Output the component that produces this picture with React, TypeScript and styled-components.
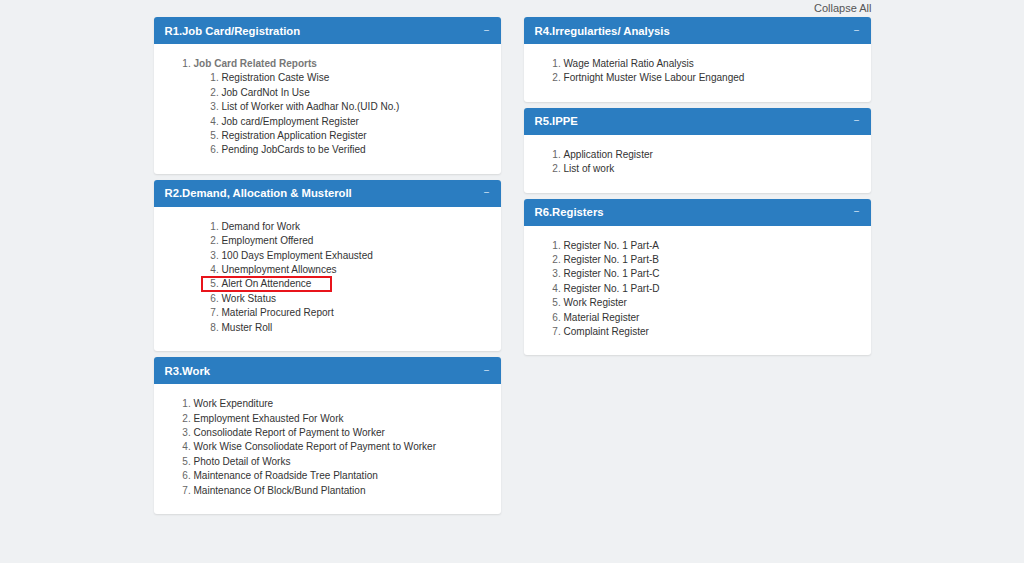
import React from 'react'
import styled, { createGlobalStyle } from 'styled-components'

type Item = { label: string; highlighted?: boolean }
type Section = { title: string; items: Item[]; group?: string; nested?: boolean }

const LEFT: Section[] = [
    {
        title: 'R1.Job Card/Registration',
        group: 'Job Card Related Reports',
        items: [
            { label: 'Registration Caste Wise' },
            { label: 'Job CardNot In Use' },
            { label: 'List of Worker with Aadhar No.(UID No.)' },
            { label: 'Job card/Employment Register' },
            { label: 'Registration Application Register' },
            { label: 'Pending JobCards to be Verified' },
        ],
    },
    {
        title: 'R2.Demand, Allocation & Musteroll',
        nested: true,
        items: [
            { label: 'Demand for Work' },
            { label: 'Employment Offered' },
            { label: '100 Days Employment Exhausted' },
            { label: 'Unemployment Allownces' },
            { label: 'Alert On Attendence', highlighted: true },
            { label: 'Work Status' },
            { label: 'Material Procured Report' },
            { label: 'Muster Roll' },
        ],
    },
    {
        title: 'R3.Work',
        items: [
            { label: 'Work Expenditure' },
            { label: 'Employment Exhausted For Work' },
            { label: 'Consoliodate Report of Payment to Worker' },
            { label: 'Work Wise Consoliodate Report of Payment to Worker' },
            { label: 'Photo Detail of Works' },
            { label: 'Maintenance of Roadside Tree Plantation' },
            { label: 'Maintenance Of Block/Bund Plantation' },
        ],
    },
]

const RIGHT: Section[] = [
    {
        title: 'R4.Irregularties/ Analysis',
        items: [{ label: 'Wage Material Ratio Analysis' }, { label: 'Fortnight Muster Wise Labour Enganged' }],
    },
    {
        title: 'R5.IPPE',
        items: [{ label: 'Application Register' }, { label: 'List of work' }],
    },
    {
        title: 'R6.Registers',
        items: [
            { label: 'Register No. 1 Part-A' },
            { label: 'Register No. 1 Part-B' },
            { label: 'Register No. 1 Part-C' },
            { label: 'Register No. 1 Part-D' },
            { label: 'Work Register' },
            { label: 'Material Register' },
            { label: 'Complaint Register' },
        ],
    },
]

function ReportList({ items, inner }: { items: Item[]; inner?: boolean }): JSX.Element {
    return (
        <List $inner={inner}>
            {items.map(item => (
                <ListItem key={item.label} $highlighted={item.highlighted}>
                    {item.label}
                </ListItem>
            ))}
        </List>
    )
}

function Panel({ section }: { section: Section }): JSX.Element {
    return (
        <StyledPanel>
            <PanelHeading>
                <span>{section.title}</span>
                <Toggle>−</Toggle>
            </PanelHeading>
            <PanelBody>
                {section.group ? (
                    <List>
                        <GroupItem>
                            <strong>{section.group}</strong>
                            <ReportList items={section.items} inner />
                        </GroupItem>
                    </List>
                ) : section.nested ? (
                    <List>
                        <PlainItem>
                            <ReportList items={section.items} inner />
                        </PlainItem>
                    </List>
                ) : (
                    <ReportList items={section.items} />
                )}
            </PanelBody>
        </StyledPanel>
    )
}

export default function App(): JSX.Element {
    return (
        <>
            <GlobalStyle />
            <Page>
                <TopBar>
                    <CollapseAll>Collapse All</CollapseAll>
                </TopBar>
                <Columns>
                    <Column>
                        {LEFT.map(section => (
                            <Panel key={section.title} section={section} />
                        ))}
                    </Column>
                    <Column>
                        {RIGHT.map(section => (
                            <Panel key={section.title} section={section} />
                        ))}
                    </Column>
                </Columns>
            </Page>
        </>
    )
}

const GlobalStyle = createGlobalStyle`
    html, body {
        margin: 0;
        padding: 0;
        background: #eff1f3;
        font-family: "Liberation Sans", Arial, sans-serif;
        color: #333;
    }
`

const Page = styled.div`
    width: 717px;
    margin: 0 auto;
    min-height: 563px;
`

const TopBar = styled.div`
    display: flex;
    justify-content: flex-end;
    height: 17px;
`

const CollapseAll = styled.span`
    font-size: 11px;
    line-height: 16px;
    color: #555;
    margin-right: -1px;
`

const Columns = styled.div`
    display: grid;
    grid-template-columns: 347px 347px;
    column-gap: 23px;
    align-items: start;
`

const Column = styled.div`
    display: flex;
    flex-direction: column;
    gap: 6px;
`

const StyledPanel = styled.section`
    background: #fff;
    border-radius: 3px;
    box-shadow: 0 1px 2px rgba(0, 0, 0, 0.1);
`

const PanelHeading = styled.div`
    display: flex;
    align-items: center;
    justify-content: space-between;
    height: 27px;
    padding: 0 11px;
    background: #2b7dc1;
    border-radius: 3px 3px 0 0;
    color: #fff;
    font-size: 11.3px;
    font-weight: bold;
`

const Toggle = styled.span`
    font-size: 10px;
    font-weight: normal;
    color: #d6e6f5;
    margin-top: -1px;
`

const PanelBody = styled.div`
    padding: 13px 11px 9px;
    font-size: 10.05px;
    line-height: 14.4px;
`

const List = styled.ol<{ $inner?: boolean }>`
    margin: 0 0 ${p => (p.$inner ? 0 : 7)}px;
    padding-left: ${p => (p.$inner ? 28 : 29)}px;

    li::marker {
        color: #666;
    }
`

const ListItem = styled.li<{ $highlighted?: boolean }>`
    position: relative;
    color: #333;

    &::after {
        content: '';
        display: ${p => (p.$highlighted ? 'block' : 'none')};
        position: absolute;
        left: -21px;
        top: -1px;
        width: 131px;
        height: 16px;
        border: 2px solid #e8141b;
        box-sizing: border-box;
    }
`

const GroupItem = styled.li`
    strong {
        color: #777;
    }
`

const PlainItem = styled.li`
    list-style: none;
`
